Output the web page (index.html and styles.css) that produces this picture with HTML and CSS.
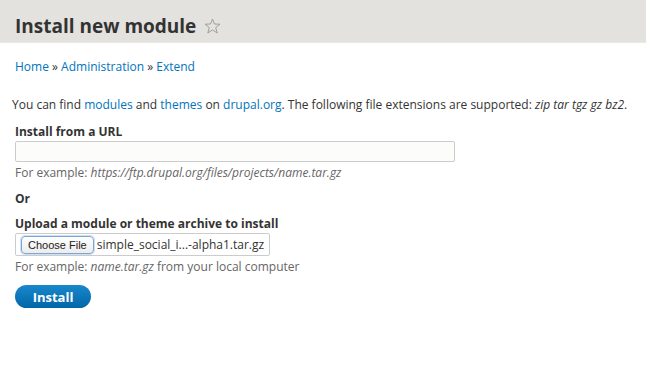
FILE: index.html
```html
<!DOCTYPE html>
<html lang="en">
<head>
    <meta charset="UTF-8">
    <title>Install new module</title>
    <link rel="stylesheet" href="styles.css">
</head>
<body>
    <header class="page-header">
        <h1>Install new module
            <svg class="star" width="17" height="16" viewBox="0 0 17 16">
                <path d="M8.5 1 L10.5 6 L16 6.2 L11.7 9.6 L13.2 15 L8.5 11.9 L3.8 15 L5.3 9.6 L1 6.2 L6.5 6 Z" fill="none" stroke="#a09f9a" stroke-width="1"/>
            </svg>
        </h1>
    </header>

    <div class="content">
        <nav class="breadcrumb">
            <a href="#">Home</a> » <a href="#">Administration</a> » <a href="#">Extend</a>
        </nav>

        <p class="help">You can find <a href="#">modules</a> and <a href="#">themes</a> on <a href="#">drupal.org</a>. The following file extensions are supported: <em>zip tar tgz gz bz2</em>.</p>

        <form class="install-form">
            <div class="form-item">
                <label for="url">Install from a URL</label>
                <input type="text" id="url" class="text-field">
                <div class="description">For example: <em>https://ftp.drupal.org/files/projects/name.tar.gz</em></div>
            </div>

            <div class="form-or">Or</div>

            <div class="form-item">
                <label>Upload a module or theme archive to install</label>
                <div class="file-field">
                    <span class="file-button">Choose File</span>
                    <span class="file-name">simple_social_i...-alpha1.tar.gz</span>
                </div>
                <div class="description">For example: <em>name.tar.gz</em> from your local computer</div>
            </div>

            <button type="button" class="install-button">Install</button>
        </form>
    </div>
</body>
</html>
```

FILE: styles.css
```css
* {
    margin: 0;
    padding: 0;
    box-sizing: border-box;
}

body {
    font-family: "Open Sans", "DejaVu Sans", sans-serif;
    font-size: 12px;
    color: #333333;
    background-color: #ffffff;
}

a {
    color: #0074bd;
    text-decoration: none;
}

.page-header {
    background-color: #e4e2de;
    height: 43px;
    padding: 13px 15px 0;
    border-bottom: 1px solid #ebe9e5;
}

h1 {
    font-size: 19px;
    font-weight: 700;
    color: #333333;
    line-height: 26px;
    display: flex;
    align-items: center;
    gap: 8px;
}

.star {
    margin-top: -1px;
}

.content {
    padding: 16px 0 0 12px;
}

.breadcrumb {
    padding-left: 3px;
    line-height: 16px;
}

.help {
    margin-top: 22px;
    line-height: 16px;
    white-space: nowrap;
}

.install-form {
    padding-left: 3px;
    margin-top: 11px;
}

label {
    display: block;
    font-weight: 700;
    line-height: 16px;
    margin-bottom: 1px;
}

.text-field {
    display: block;
    width: 440px;
    height: 21px;
    border: 1px solid #cccccc;
    border-radius: 2px;
    background-color: #fcfcfa;
}

.description {
    color: #666666;
    line-height: 16px;
    margin-top: 3px;
}

.form-or {
    font-weight: 700;
    margin-top: 10px;
    margin-bottom: 9px;
    line-height: 16px;
}

.file-field {
    margin-top: 1px;
    width: 255px;
    height: 23px;
    border: 1px solid #cccccc;
    border-radius: 2px;
    display: flex;
    align-items: center;
    gap: 3px;
    padding-left: 5px;
    white-space: nowrap;
}

.file-button {
    flex-shrink: 0;
    font-family: "Liberation Sans", sans-serif;
    font-size: 11px;
    color: #222222;
    background: linear-gradient(#ffffff, #ececec);
    border: 1px solid #7aa7d6;
    border-radius: 4px;
    padding: 1px 6px;
    line-height: 14px;
    box-shadow: 0 0 0 1px #cfe0f3;
}

.file-name {
    font-size: 12px;
    color: #333333;
}

.install-button {
    display: block;
    margin-top: 10px;
    width: 76px;
    height: 23px;
    border: none;
    border-radius: 12px;
    background: linear-gradient(#1a87cc, #0067a8);
    color: #ffffff;
    font-family: "Open Sans", "DejaVu Sans", sans-serif;
    font-size: 13px;
    font-weight: 700;
}
```
